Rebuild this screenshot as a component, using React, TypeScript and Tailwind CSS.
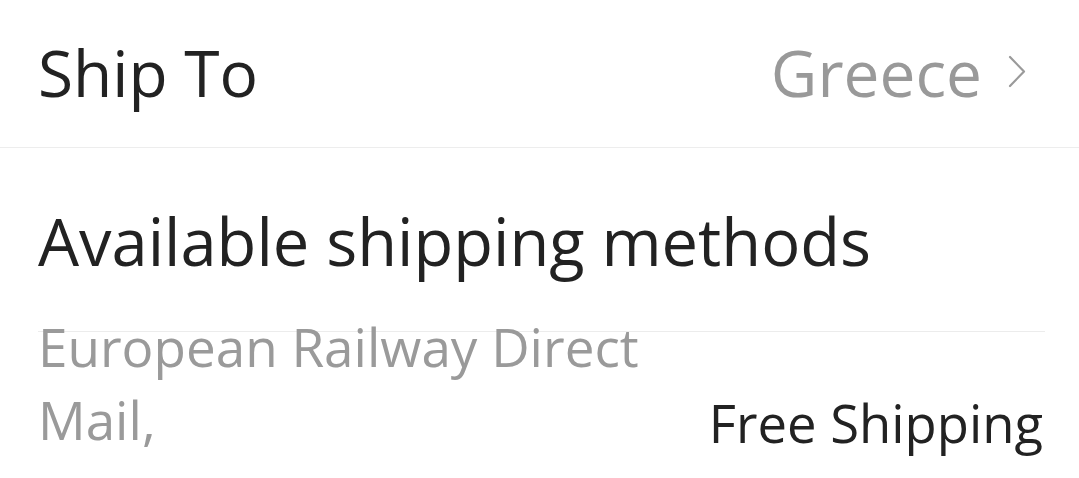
import React from "react";

export default function App() {
  return (
    <div
      className="w-[1079px] h-[478px] bg-white overflow-hidden text-[#222222]"
      style={{ fontFamily: '"Open Sans", "Noto Sans", sans-serif' }}
    >
      <div className="h-[148px] flex items-center justify-between pl-[38px] pr-[52px] border-b border-[#ededed]">
        <span className="text-[64px] leading-[87px] -mt-[3px]">Ship To</span>
        <div className="flex items-center -mt-[3px]">
          <span className="text-[64px] leading-[87px] text-[#999999]">Greece</span>
          <svg
            className="ml-[26px] mt-[-2px]"
            width="19"
            height="33"
            viewBox="0 0 19 33"
            fill="none"
          >
            <path d="M2 2 L16 16.5 L2 31" stroke="#9a9a9a" strokeWidth="2.2" strokeLinecap="round" strokeLinejoin="round" />
          </svg>
        </div>
      </div>
      <div className="pl-[38px] pr-[34px]">
        <div className="pt-[50px] pb-[46px] text-[65px] leading-[87px]">Available shipping methods</div>
        <div className="h-px bg-[#ececec]" />
        <div className="flex items-end justify-between -mt-[22px] pr-[2px]">
          <div className="w-[650px] text-[53px] leading-[73px] text-[#9a9a9a]">
            European Railway Direct Mail,
          </div>
          <div className="text-[52.6px] leading-[73px] -mb-[3px]">Free Shipping</div>
        </div>
      </div>
    </div>
  );
}
